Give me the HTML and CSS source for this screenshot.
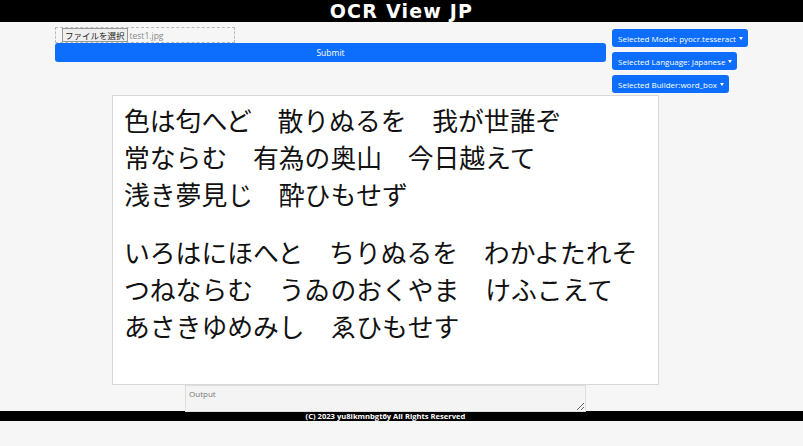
FILE: index.html
```html
<!DOCTYPE html>
<html lang="ja">
<head>
<meta charset="utf-8">
<title>OCR View JP</title>
<link rel="stylesheet" href="styles.css">
</head>
<body>
<header class="topbar"><h1 class="title">OCR View JP</h1></header>
<main class="main">
  <div class="controls">
    <form class="upload">
      <div class="file-field">
        <span class="file-btn">ファイルを選択</span>
        <span class="file-name">test1.jpg</span>
      </div>
      <button type="button" class="submit">Submit</button>
    </form>
    <div class="selects">
      <button type="button" class="dd">Selected Model: pyocr.tesseract<span class="caret"></span></button>
      <button type="button" class="dd">Selected Language: Japanese<span class="caret"></span></button>
      <button type="button" class="dd">Selected Builder:word_box<span class="caret"></span></button>
    </div>
  </div>
  <div class="viewer">
    <p class="para">色は匂へど　散りぬるを　我が世誰ぞ<br>常ならむ　有為の奥山　今日越えて<br>浅き夢見じ　酔ひもせず</p>
    <p class="para">いろはにほへと　ちりぬるを　わかよたれそ<br>つねならむ　うゐのおくやま　けふこえて<br>あさきゆめみし　ゑひもせす</p>
  </div>
  <div class="output-row">
    <textarea class="output" placeholder="Output"></textarea>
  </div>
</main>
<footer class="footer">(C) 2023 yu8ikmnbgt6y All Rights Reserved</footer>
</body>
</html>
```
FILE: styles.css
```css
* { box-sizing: border-box; }
html, body { margin: 0; padding: 0; }
body {
  background: #f5f6f5;
  font-family: "Open Sans", "Noto Sans CJK JP", sans-serif;
  height: 446px;
  overflow: hidden;
}
.topbar {
  background: #000;
  height: 22px;
  display: flex;
  align-items: center;
  justify-content: center;
}
.title {
  margin: 0;
  color: #fff;
  font-family: "DejaVu Sans", sans-serif;
  font-size: 19px;
  font-weight: 700;
  line-height: 22px;
  letter-spacing: 1.2px;
}
.main { display: flex; flex-direction: column; }
.controls {
  display: flex;
  padding-left: 55px;
  margin-top: 5px;
  height: 68px;
}
.upload { width: 551px; display: flex; flex-direction: column; }
.file-field {
  width: 180px;
  height: 16px;
  border: 1px dashed #bbb;
  display: flex;
  align-items: center;
  padding-left: 6px;
  font-size: 8px;
}
.file-btn {
  font-family: "Noto Sans CJK JP", sans-serif;
  background: #efefef;
  border: 1px solid #999;
  height: 14px;
  line-height: 12px;
  padding: 0 2px;
  font-size: 8.5px;
  color: #222;
}
.file-name { color: #888; margin-left: 2px; font-size: 8.5px; }
.submit {
  height: 19px;
  border: none;
  border-radius: 3px;
  background: #0d6efd;
  color: #fff;
  font-family: "Open Sans", sans-serif;
  font-size: 8.5px;
  padding: 0;
}
.selects {
  margin-left: 6px;
  margin-top: 2px;
  display: flex;
  flex-direction: column;
  align-items: flex-start;
  gap: 5px;
}
.dd {
  background: #0d6efd;
  color: #fff;
  border: none;
  border-radius: 3px;
  height: 18px;
  padding: 0 5px 0 6px;
  font-family: "Open Sans", sans-serif;
  font-size: 8px;
  display: flex;
  align-items: center;
}
.caret {
  display: inline-block;
  margin-left: 3px;
  border-top: 3px solid #fff;
  border-left: 2.5px solid transparent;
  border-right: 2.5px solid transparent;
}
.viewer {
  margin-left: 112px;
  width: 547px;
  height: 290px;
  background: #fff;
  border: 1px solid #d8d8d8;
  padding: 5px 11px;
  font-family: "Noto Sans CJK JP", sans-serif;
  color: #111;
  font-size: 25.8px;
  line-height: 37px;
}
.para { margin: 0 0 21px 0; white-space: nowrap; }
.output-row { padding-left: 185px; height: 26px; }
.output {
  display: block;
  width: 401px;
  height: 27px;
  margin: 0;
  background: #f3f4f3;
  border: 1px solid #ddd;
  font-family: "Open Sans", sans-serif;
  font-size: 8px;
  padding: 2px 3px;
  color: #666;
  resize: vertical;
}
.output::placeholder { color: #777; }
.footer {
  background: #000;
  color: #fff;
  font-size: 7.6px;
  font-weight: 700;
  height: 10px;
  line-height: 10px;
  text-align: center;
  padding-right: 32px;
}
```
